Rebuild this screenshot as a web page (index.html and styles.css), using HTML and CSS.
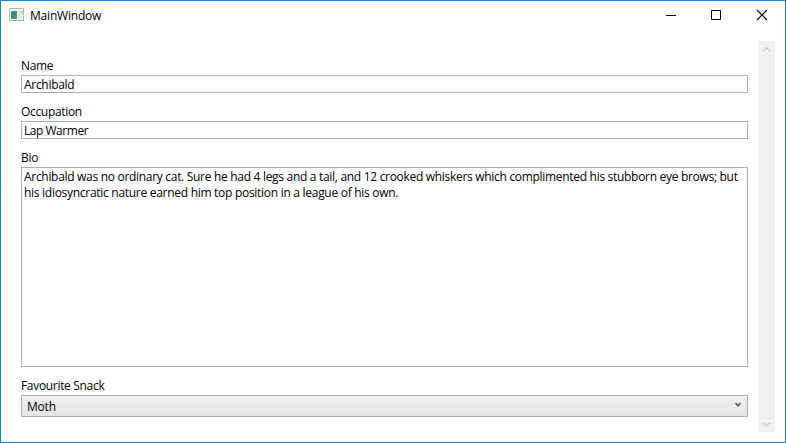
FILE: index.html
```html
<!DOCTYPE html>
<html lang="en">
<head>
<meta charset="utf-8">
<title>MainWindow</title>
<link rel="stylesheet" href="styles.css">
</head>
<body>
<div class="window">
  <header class="titlebar">
    <svg class="app-icon" width="16" height="14" viewBox="0 0 16 14">
      <defs><linearGradient id="pane" x1="0" y1="0" x2="1" y2="1"><stop offset="0" stop-color="#5078a8"/><stop offset=".5" stop-color="#45877f"/><stop offset="1" stop-color="#65ad78"/></linearGradient></defs>
      <rect x=".5" y=".5" width="14" height="12" fill="#f3f3f3" stroke="#b5b8bd"/>
      <path d="M0 12.5h15" stroke="#a4a7ab"/>
      <rect x="2" y="3" width="6" height="8" fill="url(#pane)"/>
      <rect x="9" y="3" width="3" height="8" fill="#e0e3e6"/>
      <rect x="12" y="3" width="2" height="3" fill="#b8dcc0"/>
    </svg>
    <span class="title">MainWindow</span>
    <div class="controls">
      <svg width="46" height="29" viewBox="0 0 46 29"><path d="M17 14.5h10" stroke="#000"/></svg>
      <svg width="46" height="29" viewBox="0 0 46 29"><path d="M16.5 9.5h9v9h-9z" fill="none" stroke="#000"/></svg>
      <svg width="46" height="29" viewBox="0 0 46 29"><path d="M16 9l10 10M26 9L16 19" stroke="#000" stroke-width="1.1"/></svg>
    </div>
  </header>
  <main class="content">
    <form class="form">
      <div class="label name">Name</div>
      <div class="box archibald">Archibald</div>
      <div class="label occupation">Occupation</div>
      <div class="box warmer">Lap Warmer</div>
      <div class="label bio">Bio</div>
      <div class="box area"><div class="line first">Archibald was no ordinary cat. Sure he had 4 legs and a tail, and 12 crooked whiskers which complimented his stubborn eye brows; but</div><div class="line second">his idiosyncratic nature earned him top position in a league of his own.</div></div>
      <div class="label snack">Favourite Snack</div>
      <div class="box combo"><span>Moth</span><svg width="6" height="6" viewBox="0 0 6 6"><path d="M.5 1L3 3.8 5.5 1" fill="none" stroke="#555" stroke-width="1.5"/></svg></div>
    </form>
    <div class="scrollbar">
      <svg width="9" height="7" viewBox="0 0 9 7"><path d="M1 5.5L4.5 2 8 5.5" fill="none" stroke="#d2d2d2" stroke-width="1.7"/></svg>
      <svg width="9" height="7" viewBox="0 0 9 7"><path d="M1 1.5L4.5 5 8 1.5" fill="none" stroke="#d2d2d2" stroke-width="1.7"/></svg>
    </div>
  </main>
</div>
</body>
</html>
```
FILE: styles.css
```css
* { box-sizing: border-box; }
body { margin: 0; background: #fff; color: #000; font: 12px/16px "Open Sans", "Noto Sans", sans-serif; }
svg { display: block; flex: none; }
.window { width: 786px; height: 443px; border: 1px solid #1a7fd4; overflow: hidden; }
.titlebar { height: 40px; display: flex; align-items: flex-start; padding-left: 8px; }
.app-icon { margin-top: 7px; }
.title { margin: 7px 0 0 5px; letter-spacing: -.2px; }
.controls { display: flex; margin-left: auto; margin-right: -2px; }
.content { display: flex; justify-content: space-between; height: 391px; padding: 0 10px 0 20px; }
.form { width: 727px; padding-top: 16px; white-space: nowrap; }
.label { height: 18px; padding-top: 1px; letter-spacing: -.32px; }
.box { height: 18px; border: 1px solid #abadb3; padding: 1px 0 0 2px; margin-bottom: 10px; letter-spacing: -.3px; }
.warmer { letter-spacing: -.47px; }
.area { height: 200px; }
.first { letter-spacing: -.302px; }
.second { letter-spacing: -.284px; }
.combo { height: 22px; padding: 2px 6px 0 5px; letter-spacing: -.2px; display: flex; justify-content: space-between; align-items: center; background: linear-gradient(#f0f0f0, #e5e5e5); border-color: #acacac; }
.combo svg { margin-top: -5px; }
.scrollbar { width: 17px; height: 391px; background: #f0f0f0; display: flex; flex-direction: column; justify-content: space-between; align-items: center; padding: 5px 0 4px; }
```
